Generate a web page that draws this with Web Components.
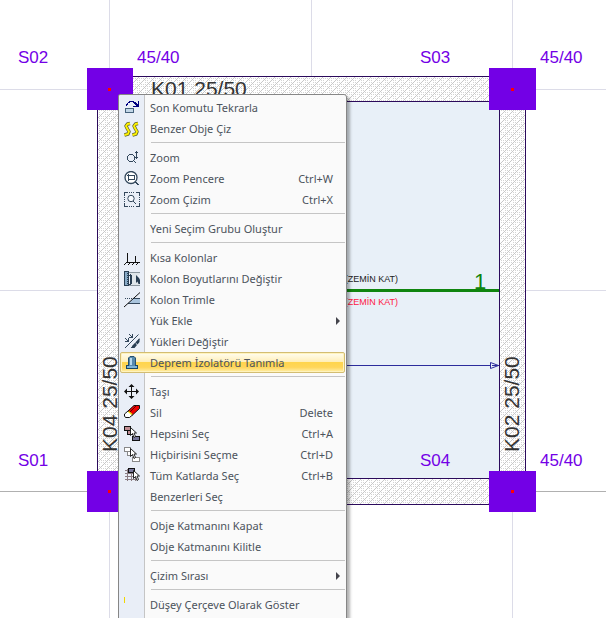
<!DOCTYPE html>
<html lang="tr">
<head>
<meta charset="utf-8">
<title>Kat Planı</title>
<style>
    body {
        margin: 0;
        background: #fff;
    }
</style>
</head>
<body>
<plan-view>
    <context-menu>
        <menu-item icon="repeat">Son Komutu Tekrarla</menu-item>
        <menu-item icon="similar">Benzer Obje Çiz</menu-item>
        <menu-separator></menu-separator>
        <menu-item icon="zoom">Zoom</menu-item>
        <menu-item icon="zoom-window" shortcut="Ctrl+W">Zoom Pencere</menu-item>
        <menu-item icon="zoom-extents" shortcut="Ctrl+X">Zoom Çizim</menu-item>
        <menu-separator></menu-separator>
        <menu-item>Yeni Seçim Grubu Oluştur</menu-item>
        <menu-separator></menu-separator>
        <menu-item icon="short-column">Kısa Kolonlar</menu-item>
        <menu-item icon="column-size">Kolon Boyutlarını Değiştir</menu-item>
        <menu-item icon="trim">Kolon Trimle</menu-item>
        <menu-item submenu>Yük Ekle</menu-item>
        <menu-item icon="loads">Yükleri Değiştir</menu-item>
        <menu-item icon="isolator" active>Deprem İzolatörü Tanımla</menu-item>
        <menu-separator></menu-separator>
        <menu-item icon="move">Taşı</menu-item>
        <menu-item icon="erase" shortcut="Delete">Sil</menu-item>
        <menu-item icon="select-all" shortcut="Ctrl+A">Hepsini Seç</menu-item>
        <menu-item icon="select-none" shortcut="Ctrl+D">Hiçbirisini Seçme</menu-item>
        <menu-item icon="select-floors" shortcut="Ctrl+B">Tüm Katlarda Seç</menu-item>
        <menu-item>Benzerleri Seç</menu-item>
        <menu-separator></menu-separator>
        <menu-item>Obje Katmanını Kapat</menu-item>
        <menu-item>Obje Katmanını Kilitle</menu-item>
        <menu-separator></menu-separator>
        <menu-item submenu>Çizim Sırası</menu-item>
        <menu-separator></menu-separator>
        <menu-item icon="frame">Düşey Çerçeve Olarak Göster</menu-item>
    </context-menu>
</plan-view>

<script>
// 16x16 menu icons
const cursor = (x, y) => `<path transform="translate(${x} ${y})" d="M.5.5v8l2-2 1.500 4 1.500-1-1.500-3.500H6.500z" fill="#fff" stroke="#111" stroke-width=".9" shape-rendering="auto"/>`;

const icons = {
    'repeat': `
        <rect x="1.5" y="8.5" width="8" height="4" rx="1" fill="#c3d7e8" stroke="#46627c"/>
        <path d="M2 6V4h1V3h1V2h1V1h5v1h2v1h1v1h1V1h1v6H9V6h3V5h-1V4h-1V3H9V2H6v1H4v2H3v1z" fill="#000080"/>`,
    'similar': `
        <g shape-rendering="auto" fill="none" stroke-linejoin="round">
        <path d="M6 2.500L3.500 3 2 5l1.500 3L5 10.500 4 13l-3.500 1M14 2.500l-2.500.5L10 5l1.500 3 1.500 2.500-1 2.500-3.500 1" stroke="#5d6230" stroke-width="3.400"/>
        <path d="M6 2.500L3.500 3 2 5l1.500 3L5 10.500 4 13l-3.500 1M14 2.500l-2.500.5L10 5l1.500 3 1.500 2.500-1 2.500-3.500 1" stroke="#fff200" stroke-width="1.900"/></g>`,
    'zoom': `
        <path d="M5 4h4v1H5zM4 5h1v1H4zM9 5h1v1H9zM3 6h1v4H3zM10 6h1v4h-1zM4 10h1v1H4zM9 10h1v1H9zM5 11h4v1H5zM10 11h1v1h1v1h-1v-1h-1z" fill="#33475c"/>
        <path d="M12 1h1v1h1v1h-1v4h1v1h-1v1h-1V8h-1V7h1V3h-1V2h1z" fill="#33475c"/>`,
    'zoom-window': `
        <circle cx="7" cy="6.500" r="6" fill="#fff" stroke="#33475c" stroke-width="1.300" shape-rendering="auto"/>
        <path d="M4.500 4.500h6v4h-6zM3 4.500h8M4.500 3v7" fill="none" stroke="#33475c"/>
        <path d="M11.500 11l3 3" stroke="#33475c" stroke-width="2"/>`,
    'zoom-extents': `
        <path d="M.5 4V.5H4M12 .5h3.500V4M.5 11v3.500H4M12 14.500h3.500V11" fill="none" stroke="#33475c"/>
        <path d="M5 .5h6M5 14.500h6M.5 5v5M15.500 5v5" stroke="#33475c" stroke-dasharray="1 1"/>
        <circle cx="7" cy="6.500" r="3.200" fill="#f7faff" stroke="#33475c" shape-rendering="auto"/>
        <path d="M9 9l3.500 3.500" stroke="#33475c"/>`,
    'short-column': `
        <path d="M3.500 3v10M11.500 6v7M2 12.500h14" fill="none" stroke="#111"/>
        <path d="M0 14h1v1H0zM1 13h1v1H1zM4 14h1v1H4zM5 13h1v1H5zM8 14h1v1H8zM9 13h1v1H9zM12 14h1v1h-1zM13 13h1v1h-1z" fill="#111"/>`,
    'column-size': `
        <path d="M.5.5h4v14h-4z" fill="#86a8c5" stroke="#293e53"/>
        <path d="M3 2.500h2M3 4.500h2M3 6.500h2M3 8.500h2M3 10.500h2M3 12.500h2" stroke="#293e53"/>
        <path d="M6 1h10v2l-2 1v8l2 1v2H6v-2l2-1V4L6 3z" fill="#dfe5ea"/>
        <path d="M5 1.500h11M5 14.500h11" stroke="#8b969f"/>
        <path d="M6 3h1v1h1v9H7v1H5v-1h1V5H5V4h1z" fill="#293e53"/>
        <path d="M12 4v8l1.500-1.500 1 2.500H16V9l-1-2z" fill="#293e53" shape-rendering="auto"/>`,
    'trim': `
        <path d="M9 6h7v5H4z" fill="#a9c4dd"/>
        <path d="M9 6.500h7M4 11.500h12" stroke="#33475c"/>
        <path d="M1 6.500h8" stroke="#33475c" stroke-dasharray="1 1"/>
        <path d="M0 15L16 .5" stroke="#111" shape-rendering="auto"/>`,
    'loads': `
        <path d="M1 14L14.500.5M7 14L15.500 5" stroke="#33475c" shape-rendering="auto"/>
        <path d="M1 4l3 3M4.500 4v3.500H1M5 0l3 3M8.500 0v3.500H5" fill="none" stroke="#33475c"/>
        <path d="M15.500 4v4l-2 2.500-2-2zM11 9l2 2-2.500 3H8v-2z" fill="#293e53" shape-rendering="auto"/>`,
    'isolator': `
        <path d="M4.500 11V3L6 1.500h4L11.500 3v8" fill="#5689ae" stroke="#245070" shape-rendering="auto"/>
        <path d="M6 3h2v8H6z" fill="#b4d7ed"/>
        <path d="M2.500 10.500h11v3h-11z" fill="#7eb4d8" stroke="#174665"/>
        <path d="M5 10h6v1H5z" fill="#5689ae"/>`,
    'move': `
        <path d="M7.500 1v13M1 7.500h13" stroke="#111"/>
        <path d="M7.500 0L10.500 3h-6zM7.500 15L4.500 12h6zM0 7.500l3-3v6zM15 7.500l-3-3v6z" fill="#111" shape-rendering="auto"/>`,
    'erase': `
        <g shape-rendering="auto">
        <path d="M10 .5h5.500v3L8.500 10 4 6z" fill="#ee0000" stroke="#111"/>
        <path d="M12.500.5L6 7" stroke="#5a0000"/>
        <path d="M4 6l4.500 4-3 2.500H1.500L.5 11V9z" fill="#fff" stroke="#111"/>
        <path d="M4.500 6.500l3.500 3" stroke="#ffe600" stroke-width="1.400"/></g>`,
    'select-all': `
        <path d="M.5.5h6v4h-6zM3.500 4.500h6v4h-6z" fill="#c18d93" stroke="#111"/>
        <path d="M8.500 10.500h7v4h-7z" fill="#77779b" stroke="#111"/>
        ${cursor(6, 1)}`,
    'select-none': `
        <path d="M.5.5h6v4h-6zM3.500 4.500h6v4h-6zM8.500 10.500h7v4h-7z" fill="#fff" stroke="#888"/>
        ${cursor(6, 1)}`,
    'select-floors': `
        <path d="M1 2.500h9M1 5.500h11M1 8.500h11M1 11.500h11M3.500 1v12M7.500 1v12M11.500 6v7" stroke="#8b7d83"/>
        <path d="M4.500.5h6v4h-6z" fill="#77779b" stroke="#111"/>
        ${cursor(9, 2)}`,
    'frame': `<path d="M0 0h1v6H0z" fill="#f2d600"/>`
};

class MenuItem extends HTMLElement {
    constructor() {
        super();
        this.attachShadow({ mode: 'open' });
    }

    connectedCallback() {
        const icon = icons[this.getAttribute('icon')] || '';
        const shortcut = this.getAttribute('shortcut') || '';

        this.shadowRoot.innerHTML = `
<style>
    :host {
        display: block;
    }

    button {
        display: flex;
        align-items: center;
        box-sizing: border-box;
        width: 100%;
        height: 21px;
        padding: 0 3px;
        border: 1px solid transparent;
        border-radius: 2px;
        background: none;
        color: inherit;
        font: inherit;
        text-align: left;
        white-space: nowrap;
    }

    :host([active]) button {
        border-color: #d3bd72;
        background: linear-gradient(#fffdf0, #ffefba 45%, #ffd54d 50%, #ffd65a 75%, #fff0ad);
        box-shadow: inset 0 0 0 1px #fff3bd;
    }

    .icon {
        flex: none;
        width: 16px;
        height: 16px;
        margin-right: 10px;
    }

    .label {
        flex: 1;
    }

    .shortcut {
        margin-right: 8px;
    }

    .arrow {
        width: 5px;
        height: 8px;
        fill: #44444c;
    }
</style>
<button type="button" role="menuitem">
    <svg class="icon" viewBox="0 0 16 16" shape-rendering="crispEdges" aria-hidden="true">${icon}</svg>
    <span class="label"><slot></slot></span>
    ${shortcut && `<span class="shortcut">${shortcut}</span>`}
    ${this.hasAttribute('submenu') ? '<svg class="arrow" viewBox="0 0 5 8" aria-hidden="true"><path d="M0 0l4 4-4 4z"/></svg>' : ''}
</button>`;
    }
}

class MenuSeparator extends HTMLElement {
    constructor() {
        super();
        this.attachShadow({ mode: 'open' }).innerHTML = `
<style>
    :host {
        display: block;
        padding: 3px 0 4px 31px;
    }

    hr {
        height: 1px;
        margin: 0;
        border: 0;
        background: #c5c5c5;
    }
</style>
<hr>`;
    }
}

class ContextMenu extends HTMLElement {
    constructor() {
        super();
        this.attachShadow({ mode: 'open' }).innerHTML = `
<style>
    :host {
        display: block;
        box-sizing: border-box;
        width: 229px;
        padding: 2px 1px 8px;
        border: 1px solid #868686;
        border-radius: 2px 3px 3px 2px;
        background: linear-gradient(90deg, #e9eef7 25px, #c5c5c5 25px 26px, #fafafa 26px);
        box-shadow: 3px 3px 3px rgba(0, 0, 0, 0.3);
        color: #4c535c;
        font: 11px/20px 'Noto Sans', 'Open Sans', sans-serif;
    }
</style>
<div role="menu"><slot></slot></div>`;
    }
}

class PlanView extends HTMLElement {
    constructor() {
        super();
        this.attachShadow({ mode: 'open' }).innerHTML = `
<style>
    :host {
        display: block;
        position: relative;
        height: 100vh;
        overflow: hidden;
    }

    svg {
        display: block;
        width: 100%;
        height: 100%;
        font-family: 'Liberation Sans', Arial, sans-serif;
    }

    .menu {
        position: absolute;
        left: 118px;
        top: 94px;
    }

    .grid {
        stroke: #dcdce8;
    }

    .edge {
        fill: none;
        stroke: #2b0a5c;
    }

    .column {
        fill: #7300e6;
    }

    .node {
        fill: #ff0000;
    }

    .name {
        font-size: 17px;
        fill: #7300e6;
    }

    .beam {
        font-size: 21px;
        fill: #333;
    }

    .floor {
        font-size: 9px;
        text-anchor: end;
    }
</style>
<svg role="img" aria-label="Kat planı">
    <defs>
        <pattern id="hatch" width="8" height="8" patternUnits="userSpaceOnUse">
            <path fill="#c8c8c8" shape-rendering="crispEdges" d="M0 7h1v1H0zM1 6h1v1H1zM2 5h1v1H2zM3 4h1v1H3zM4 3h1v1H4zM5 2h1v1H5zM6 1h1v1H6zM7 0h1v1H7z"/>
            <path fill="#d4d4d4" shape-rendering="crispEdges" d="M1 2h1v1H1zM3 0h1v1H3zM5 6h1v1H5zM7 4h1v1H7zM1 0h1v1H1zM7 6h1v1H7zM3 2h1v1H3zM1 4h1v1H1zM5 4h1v1H5zM3 6h1v1H3z"/>
        </pattern>
    </defs>

    <g class="grid" shape-rendering="crispEdges">
        <path d="M0 89.500h9999M0 290.500h9999M109.500 0v9999M311.500 0v76M512.500 0v9999"/>
        <path d="M0 491.500h9999" stroke="#b0b0b0"/>
    </g>

    <g shape-rendering="crispEdges">
        <path d="M97 76h429v429H97z" fill="#fff"/>
        <path d="M97 76h429v429H97z" fill="url(#hatch)"/>
        <path d="M123 101h376v377H123z" fill="#e8f0f8"/>
        <path class="edge" d="M97.500 76.500h428v428h-428zM123.500 101.500h376v377h-376z"/>
        <path d="M123 290.500h376" stroke="#0f850f" stroke-width="3"/>
        <path d="M123 365.500h376" stroke="#2c2c9c"/>
    </g>
    <path d="M490.500 362.500v6l8-3z" fill="#e8f0f8" stroke="#2c2c9c"/>
    <path d="M492 365.500h7" stroke="#2c2c9c"/>

    <g class="column" shape-rendering="crispEdges">
        <rect x="87" y="68" width="46" height="42"/>
        <rect x="489" y="68" width="47" height="42"/>
        <rect x="87" y="471" width="46" height="41"/>
        <rect x="489" y="471" width="47" height="41"/>
    </g>
    <g class="node">
        <rect x="108" y="88" width="3" height="3"/>
        <rect x="511" y="88" width="3" height="3"/>
        <rect x="108" y="490" width="3" height="3"/>
        <rect x="511" y="490" width="3" height="3"/>
    </g>

    <g class="name">
        <text x="18" y="63">S02</text>
        <text x="137" y="63">45/40</text>
        <text x="420" y="63">S03</text>
        <text x="540" y="63">45/40</text>
        <text x="18" y="466">S01</text>
        <text x="420" y="466">S04</text>
        <text x="540" y="466">45/40</text>
    </g>
    <g class="beam">
        <text x="151" y="96">K01 25/50</text>
        <text transform="translate(117 452) rotate(-90)">K04 25/50</text>
        <text transform="translate(519 452) rotate(-90)">K02 25/50</text>
    </g>
    <text x="474" y="289" font-size="22" fill="#0f850f">1</text>
    <text class="floor" x="398" y="282" fill="#222">(ZEMİN KAT)</text>
    <text class="floor" x="398" y="305" fill="#ff1744">(ZEMİN KAT)</text>
</svg>
<div class="menu"><slot></slot></div>`;
    }
}

customElements.define('menu-item', MenuItem);
customElements.define('menu-separator', MenuSeparator);
customElements.define('context-menu', ContextMenu);
customElements.define('plan-view', PlanView);
</script>
</body>
</html>
